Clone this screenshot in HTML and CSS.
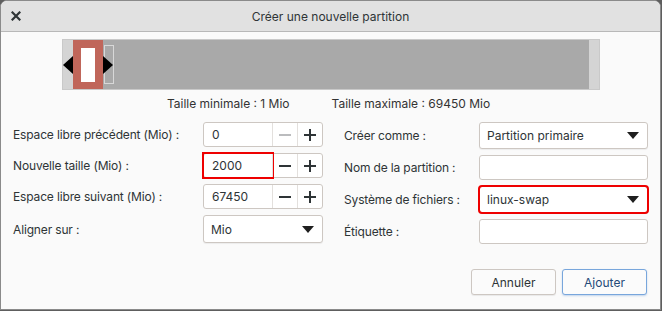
FILE: index.html
```html
<!DOCTYPE html>
<html lang="fr">
<head>
  <meta charset="UTF-8">
  <meta name="viewport" content="width=device-width, initial-scale=1">
  <title>Créer une nouvelle partition</title>
  <link rel="stylesheet" href="styles.css">
</head>
<body>
  <div class="window">
    <div class="titlebar">
      <span class="close">
        <svg width="10" height="10" viewBox="0 0 10 10"><path d="M1.5 1.5 L8.5 8.5 M8.5 1.5 L1.5 8.5" stroke="#2e3436" stroke-width="2.2" stroke-linecap="square"/></svg>
      </span>
      <span class="title">Créer une nouvelle partition</span>
    </div>

    <div class="content">
      <div class="partbar">
        <div class="free-before"></div>
        <div class="part"><div class="part-inner"></div></div>
        <div class="free-after"></div>
        <div class="free-end"></div>
        <span class="handle-box"></span>
        <svg class="arrow arrow-left" width="10" height="18" viewBox="0 0 10 18"><path d="M10 0 L0 9 L10 18 Z" fill="#000"/></svg>
        <svg class="arrow arrow-right" width="10" height="18" viewBox="0 0 10 18"><path d="M0 0 L10 9 L0 18 Z" fill="#000"/></svg>
      </div>

      <div class="limits">
        <span>Taille minimale : 1 Mio</span>
        <span>Taille maximale : 69450 Mio</span>
      </div>

      <div class="form">
        <div class="col col-left">
          <div class="row">
            <label>Espace libre précédent (Mio) :</label>
            <div class="spin">
              <span class="entry">0</span>
              <span class="spin-btn disabled"><svg width="12" height="12" viewBox="0 0 12 12"><path d="M0 6 H12" stroke="currentColor" stroke-width="1.6"/></svg></span>
              <span class="spin-btn"><svg width="12" height="12" viewBox="0 0 12 12"><path d="M0 6 H12 M6 0 V12" stroke="currentColor" stroke-width="2"/></svg></span>
            </div>
          </div>
          <div class="row">
            <label>Nouvelle taille (Mio) :</label>
            <div class="spin">
              <span class="entry flagged">2000</span>
              <span class="spin-btn"><svg width="12" height="12" viewBox="0 0 12 12"><path d="M0 6 H12" stroke="currentColor" stroke-width="2"/></svg></span>
              <span class="spin-btn"><svg width="12" height="12" viewBox="0 0 12 12"><path d="M0 6 H12 M6 0 V12" stroke="currentColor" stroke-width="2"/></svg></span>
            </div>
          </div>
          <div class="row">
            <label>Espace libre suivant (Mio) :</label>
            <div class="spin">
              <span class="entry">67450</span>
              <span class="spin-btn"><svg width="12" height="12" viewBox="0 0 12 12"><path d="M0 6 H12" stroke="currentColor" stroke-width="2"/></svg></span>
              <span class="spin-btn"><svg width="12" height="12" viewBox="0 0 12 12"><path d="M0 6 H12 M6 0 V12" stroke="currentColor" stroke-width="2"/></svg></span>
            </div>
          </div>
          <div class="row">
            <label>Aligner sur :</label>
            <div class="combo">
              <span>Mio</span>
              <svg width="12" height="7" viewBox="0 0 12 7"><path d="M0 0 H12 L6 7 Z" fill="#1f1f1f"/></svg>
            </div>
          </div>
        </div>

        <div class="col col-right">
          <div class="row">
            <label>Créer comme :</label>
            <div class="combo">
              <span>Partition primaire</span>
              <svg width="12" height="7" viewBox="0 0 12 7"><path d="M0 0 H12 L6 7 Z" fill="#1f1f1f"/></svg>
            </div>
          </div>
          <div class="row">
            <label>Nom de la partition :</label>
            <div class="text-entry"></div>
          </div>
          <div class="row">
            <label>Système de fichiers :</label>
            <div class="combo flagged-combo">
              <span>linux-swap</span>
              <svg width="12" height="7" viewBox="0 0 12 7"><path d="M0 0 H12 L6 7 Z" fill="#1f1f1f"/></svg>
            </div>
          </div>
          <div class="row">
            <label>Étiquette :</label>
            <div class="text-entry"></div>
          </div>
        </div>
      </div>

      <div class="actions">
        <button class="btn">Annuler</button>
        <button class="btn btn-default">Ajouter</button>
      </div>
    </div>
  </div>
</body>
</html>
```

FILE: styles.css
```css
* {
  box-sizing: border-box;
}

body {
  margin: 0;
  background: #5e5e5e;
  font-family: 'Inter', 'Noto Sans', sans-serif;
  font-size: 12px;
  color: #2e3436;
}

.window {
  width: 661px;
  height: 310px;
  background: #fafafa;
  border: 1px solid #8a8a8a;
  border-radius: 7px 7px 0 0;
  overflow: hidden;
}

.titlebar {
  position: relative;
  height: 31px;
  background: #e1e1e1;
  border-bottom: 1px solid #b8b8b8;
  display: flex;
  align-items: center;
  justify-content: center;
}

.close {
  position: absolute;
  left: 10px;
  top: 10px;
  width: 10px;
  height: 10px;
  display: flex;
}

.title {
  font-size: 12px;
  color: #2e3436;
}

.content {
  padding: 7px 12px 0 12px;
}

/* barre de partition */
.partbar {
  position: relative;
  width: 538px;
  height: 51px;
  margin: 0 auto;
  display: flex;
  border: 1px solid #c9c9c9;
  background: #d4d4d4;
}

.free-before {
  width: 10px;
}

.part {
  width: 30px;
  background: #c0665a;
  display: flex;
  justify-content: center;
  align-items: center;
}

.part-inner {
  width: 14px;
  height: 34px;
  background: #ffffff;
}

.free-after {
  flex: 1;
  background: #a9a9a9;
}

.free-end {
  width: 10px;
}

.handle-box {
  position: absolute;
  left: 41px;
  top: 5px;
  width: 10px;
  height: 39px;
  border: 1px solid #d8d8d8;
}

.arrow {
  position: absolute;
  top: 16px;
}

.arrow-left {
  left: 0;
}

.arrow-right {
  left: 40px;
}

.limits {
  margin-top: 6px;
  height: 16px;
  line-height: 16px;
  display: flex;
  justify-content: center;
  gap: 42px;
  padding-right: 4px;
  color: #333;
}

/* formulaire */
.form {
  margin-top: 10px;
  display: grid;
  grid-template-columns: 310px 1fr;
  column-gap: 21px;
}

.col {
  display: flex;
  flex-direction: column;
  gap: 6px;
}

.row {
  display: flex;
  align-items: center;
  justify-content: space-between;
}

.row label {
  letter-spacing: -0.15px;
}

.spin {
  width: 120px;
  height: 25px;
  display: flex;
  background: #fff;
  border: 1px solid #cdc7c2;
  border-radius: 3px;
}

.entry {
  flex: 1;
  display: flex;
  align-items: center;
  padding-left: 8px;
  color: #2e3436;
}

.entry.flagged {
  outline: 2px solid #ee0000;
  outline-offset: 0;
}

.spin-btn {
  width: 25px;
  display: flex;
  align-items: center;
  justify-content: center;
  border-left: 1px solid #e3e0dd;
  color: #2e3436;
}

.spin-btn.disabled {
  color: #a4a6a8;
}

.combo {
  width: 169px;
  height: 27px;
  display: flex;
  align-items: center;
  justify-content: space-between;
  padding: 0 8px 0 7px;
  background: #fff;
  border: 1px solid #cdc7c2;
  border-radius: 3px;
  box-shadow: 0 1px 1px rgba(0, 0, 0, 0.06);
}

.col-left .combo {
  width: 120px;
  height: 28px;
}

.flagged-combo {
  outline: 2px solid #ee0000;
  outline-offset: -1px;
}

.text-entry {
  width: 169px;
  height: 25px;
  background: #fff;
  border: 1px solid #cdc7c2;
  border-radius: 3px;
}

.actions {
  margin-top: 25px;
  display: flex;
  justify-content: flex-end;
  gap: 6px;
  padding-right: 1px;
}

.btn {
  width: 85px;
  height: 26px;
  font-family: inherit;
  font-size: 12px;
  color: #2e3436;
  background: #fbfbfb;
  border: 1px solid #cdc7c2;
  border-radius: 3px;
  box-shadow: 0 1px 1px rgba(0, 0, 0, 0.07);
}

.btn-default {
  color: #254a78;
  border-color: #78a6dc;
  box-shadow: 0 1px 2px rgba(90, 140, 210, 0.35);
}
```
